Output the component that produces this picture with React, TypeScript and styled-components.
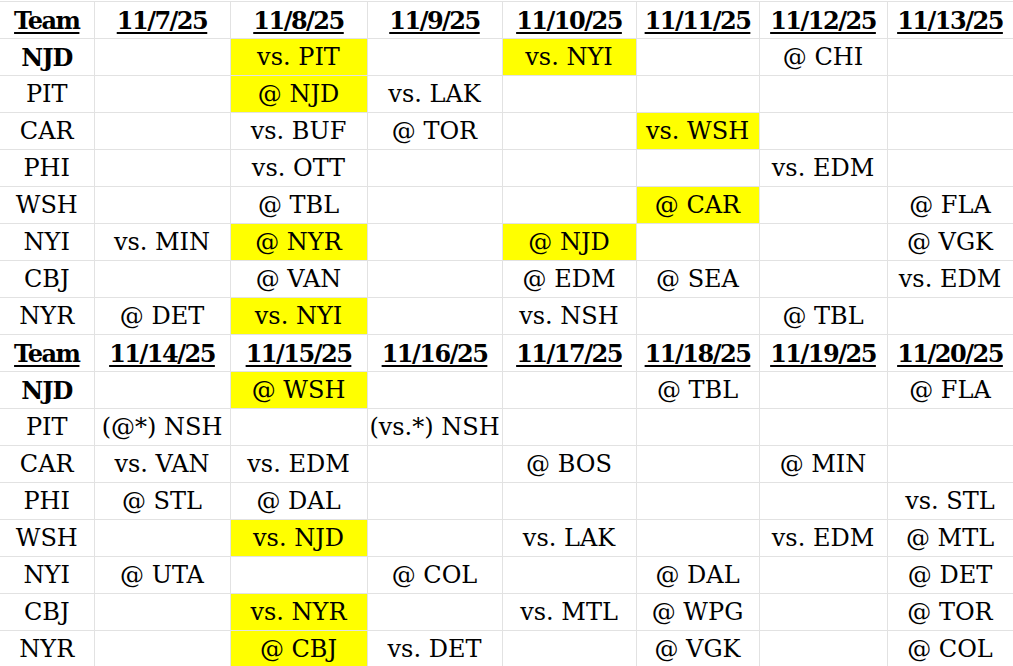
import { createGlobalStyle, styled } from 'styled-components';

const GlobalStyle = createGlobalStyle`
  html, body {
    margin: 0;
    padding: 0;
    background: #ffffff;
    overflow: hidden;
  }
`;

const Table = styled.table`
  border-collapse: collapse;
  table-layout: fixed;
  width: 1013px;
  margin-top: 1px;
  font-family: 'DejaVu Serif', 'Liberation Serif', serif;
  font-size: 24px;
  color: #000000;
`;

const Cell = styled.td<{ $hl?: boolean; $bold?: boolean }>`
  height: 36px;
  padding: 0;
  text-align: center;
  vertical-align: middle;
  white-space: nowrap;
  overflow: visible;
  border: 1px solid #e2e2e2;
  background: ${(p) => (p.$hl ? '#ffff00' : 'transparent')};
  font-weight: ${(p) => (p.$bold ? 700 : 400)};
  letter-spacing: ${(p) => (p.$bold ? '-1px' : '0')};
  &:first-child {
    border-left: none;
  }
`;

const HeadCell = styled.th`
  height: 36px;
  padding: 0;
  text-align: center;
  vertical-align: middle;
  white-space: nowrap;
  font-weight: 700;
  letter-spacing: -1.5px;
  text-decoration: underline;
  text-underline-offset: 3px;
  text-decoration-thickness: 2px;
  border: 1px solid #e2e2e2;
  &:first-child {
    border-left: none;
  }
`;

const widths = [94, 136, 137, 135, 134, 123, 128, 126];

type Game = string | [string];

type Row = { team: string; bold?: boolean; games: Game[] };

type Block = { dates: string[]; rows: Row[] };

// a game written as [text] is a highlighted (yellow) cell
const blocks: Block[] = [
  {
    dates: ['11/7/25', '11/8/25', '11/9/25', '11/10/25', '11/11/25', '11/12/25', '11/13/25'],
    rows: [
      { team: 'NJD', bold: true, games: ['', ['vs. PIT'], '', ['vs. NYI'], '', '@ CHI', ''] },
      { team: 'PIT', games: ['', ['@ NJD'], 'vs. LAK', '', '', '', ''] },
      { team: 'CAR', games: ['', 'vs. BUF', '@ TOR', '', ['vs. WSH'], '', ''] },
      { team: 'PHI', games: ['', 'vs. OTT', '', '', '', 'vs. EDM', ''] },
      { team: 'WSH', games: ['', '@ TBL', '', '', ['@ CAR'], '', '@ FLA'] },
      { team: 'NYI', games: ['vs. MIN', ['@ NYR'], '', ['@ NJD'], '', '', '@ VGK'] },
      { team: 'CBJ', games: ['', '@ VAN', '', '@ EDM', '@ SEA', '', 'vs. EDM'] },
      { team: 'NYR', games: ['@ DET', ['vs. NYI'], '', 'vs. NSH', '', '@ TBL', ''] },
    ],
  },
  {
    dates: ['11/14/25', '11/15/25', '11/16/25', '11/17/25', '11/18/25', '11/19/25', '11/20/25'],
    rows: [
      { team: 'NJD', bold: true, games: ['', ['@ WSH'], '', '', '@ TBL', '', '@ FLA'] },
      { team: 'PIT', games: ['(@*) NSH', '', '(vs.*) NSH', '', '', '', ''] },
      { team: 'CAR', games: ['vs. VAN', 'vs. EDM', '', '@ BOS', '', '@ MIN', ''] },
      { team: 'PHI', games: ['@ STL', '@ DAL', '', '', '', '', 'vs. STL'] },
      { team: 'WSH', games: ['', ['vs. NJD'], '', 'vs. LAK', '', 'vs. EDM', '@ MTL'] },
      { team: 'NYI', games: ['@ UTA', '', '@ COL', '', '@ DAL', '', '@ DET'] },
      { team: 'CBJ', games: ['', ['vs. NYR'], '', 'vs. MTL', '@ WPG', '', '@ TOR'] },
      { team: 'NYR', games: ['', ['@ CBJ'], 'vs. DET', '', '@ VGK', '', '@ COL'] },
    ],
  },
];

export default function App() {
  return (
    <>
      <GlobalStyle />
      <Table>
        <colgroup>
          {widths.map((w, i) => (
            <col key={i} style={{ width: w }} />
          ))}
        </colgroup>
        <tbody>
          {blocks.map((block, b) => [
            <tr key={`h${b}`}>
              <HeadCell>Team</HeadCell>
              {block.dates.map((d) => (
                <HeadCell key={d}>{d}</HeadCell>
              ))}
            </tr>,
            ...block.rows.map((row) => (
              <tr key={`${b}-${row.team}`}>
                <Cell $bold={row.bold}>{row.team}</Cell>
                {row.games.map((g, i) =>
                  Array.isArray(g) ? (
                    <Cell key={i} $hl>
                      {g[0]}
                    </Cell>
                  ) : (
                    <Cell key={i}>{g}</Cell>
                  ),
                )}
              </tr>
            )),
          ])}
        </tbody>
      </Table>
    </>
  );
}
